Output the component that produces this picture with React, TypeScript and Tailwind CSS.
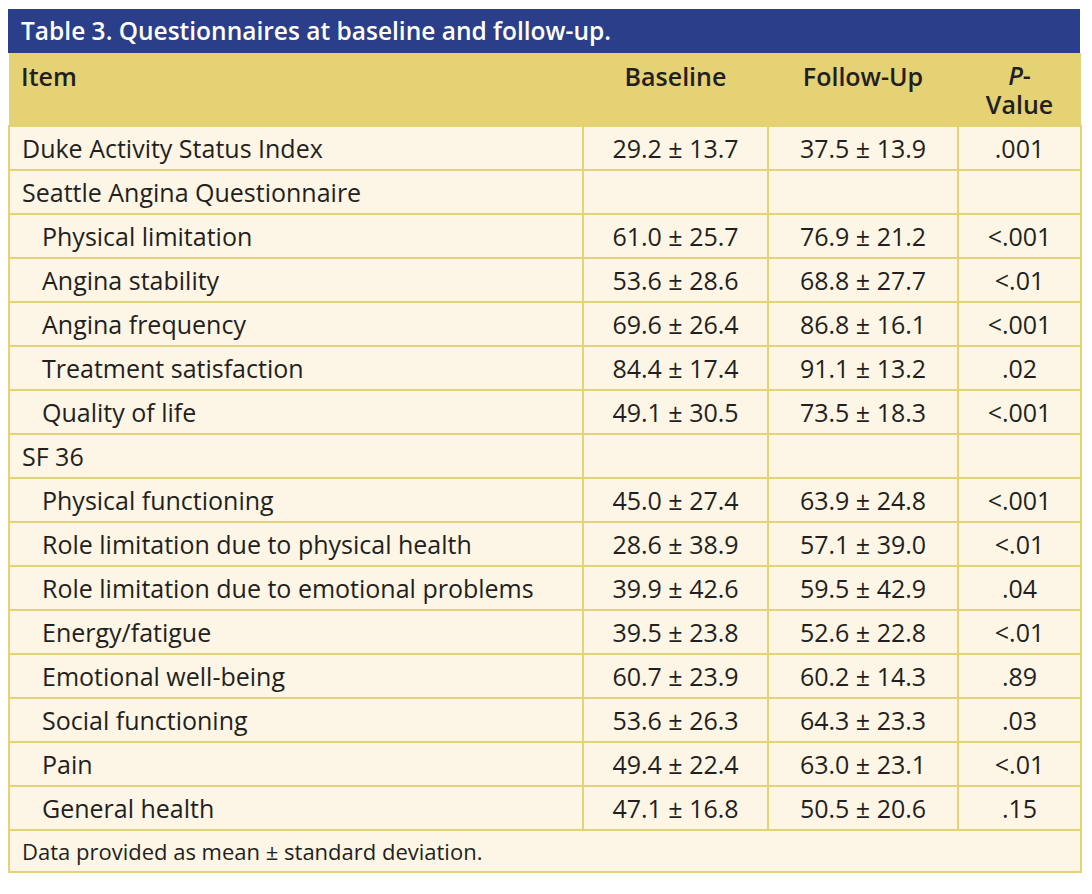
import React from "react";

type Row = { label: string; indent?: boolean; b?: string; f?: string; p?: string };

const rows: Row[] = [
  { label: "Duke Activity Status Index", b: "29.2 ± 13.7", f: "37.5 ± 13.9", p: ".001" },
  { label: "Seattle Angina Questionnaire" },
  { label: "Physical limitation", indent: true, b: "61.0 ± 25.7", f: "76.9 ± 21.2", p: "<.001" },
  { label: "Angina stability", indent: true, b: "53.6 ± 28.6", f: "68.8 ± 27.7", p: "<.01" },
  { label: "Angina frequency", indent: true, b: "69.6 ± 26.4", f: "86.8 ± 16.1", p: "<.001" },
  { label: "Treatment satisfaction", indent: true, b: "84.4 ± 17.4", f: "91.1 ± 13.2", p: ".02" },
  { label: "Quality of life", indent: true, b: "49.1 ± 30.5", f: "73.5 ± 18.3", p: "<.001" },
  { label: "SF 36" },
  { label: "Physical functioning", indent: true, b: "45.0 ± 27.4", f: "63.9 ± 24.8", p: "<.001" },
  { label: "Role limitation due to physical health", indent: true, b: "28.6 ± 38.9", f: "57.1 ± 39.0", p: "<.01" },
  { label: "Role limitation due to emotional problems", indent: true, b: "39.9 ± 42.6", f: "59.5 ± 42.9", p: ".04" },
  { label: "Energy/fatigue", indent: true, b: "39.5 ± 23.8", f: "52.6 ± 22.8", p: "<.01" },
  { label: "Emotional well-being", indent: true, b: "60.7 ± 23.9", f: "60.2 ± 14.3", p: ".89" },
  { label: "Social functioning", indent: true, b: "53.6 ± 26.3", f: "64.3 ± 23.3", p: ".03" },
  { label: "Pain", indent: true, b: "49.4 ± 22.4", f: "63.0 ± 23.1", p: "<.01" },
  { label: "General health", indent: true, b: "47.1 ± 16.8", f: "50.5 ± 20.6", p: ".15" },
];

export default function App() {
  return (
    <div className="w-[1092px] h-[894px] bg-white pt-[9px] pl-[8px] text-[#231f20]" style={{ fontFamily: '"Open Sans", "Liberation Sans", sans-serif' }}>
      <div className="w-[1072px]">
        <div className="h-[44px] bg-[#2b3e89] text-white text-[24.5px] font-semibold flex items-center pl-[13px] pt-[1px] whitespace-nowrap">
          Table 3. Questionnaires at baseline and follow-up.
        </div>
        <table className="w-[1072px] border-collapse table-fixed text-[25px]">
          <colgroup>
            <col className="w-[574px]" />
            <col className="w-[185px]" />
            <col className="w-[190px]" />
            <col className="w-[123px]" />
          </colgroup>
          <thead>
            <tr className="bg-[#e4d274] h-[73px]">
              <th className="text-left align-top pl-[12px] pt-[9px] font-semibold leading-[28px]">Item</th>
              <th className="text-center align-top pt-[9px] font-semibold leading-[28px]">Baseline</th>
              <th className="text-center align-top pt-[9px] font-semibold leading-[28px]">Follow-Up</th>
              <th className="text-center align-top pt-[8px] font-semibold leading-[29px]">
                <div><i>P</i>-</div>
                <div>Value</div>
              </th>
            </tr>
          </thead>
          <tbody className="bg-[#fdf6e6]">
            {rows.map((r, i) => (
              <tr key={i} className="h-[44px]">
                <td className={`border-2 border-[#e4d274] leading-[28px] whitespace-nowrap ${r.indent ? "pl-[32px]" : "pl-[12px]"}`}>{r.label}</td>
                <td className="border-2 border-[#e4d274] text-center leading-[28px] whitespace-nowrap">{r.b ?? ""}</td>
                <td className="border-2 border-[#e4d274] text-center leading-[28px] whitespace-nowrap">{r.f ?? ""}</td>
                <td className="border-2 border-[#e4d274] text-center leading-[28px] whitespace-nowrap">{r.p ?? ""}</td>
              </tr>
            ))}
            <tr className="h-[42px]">
              <td colSpan={4} className="border-2 border-[#e4d274] pl-[12px] text-[22px]">
                Data provided as mean ± standard deviation.
              </td>
            </tr>
          </tbody>
        </table>
      </div>
    </div>
  );
}
